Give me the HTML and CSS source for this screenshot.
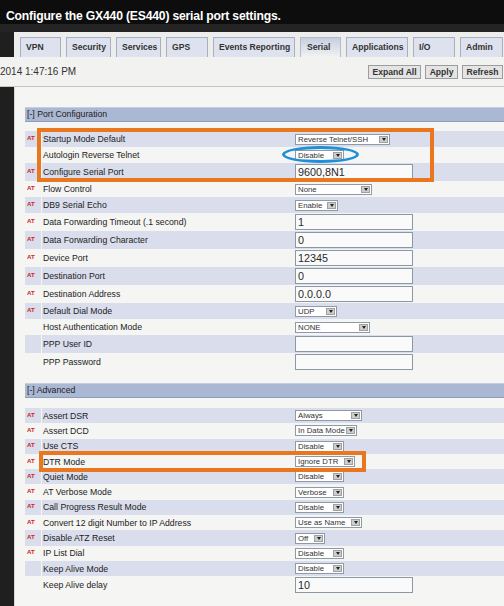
FILE: index.html
```html
<!DOCTYPE html>
<html>
<head>
<meta charset="utf-8">
<link rel="stylesheet" href="styles.css">
</head>
<body>
<div class="titlebar">Configure the GX440 (ES440) serial port settings.</div>
<div class="spacer"></div>
<div class="tabbar">
  <div class="tab">VPN</div>
  <div class="tab">Security</div>
  <div class="tab">Services</div>
  <div class="tab">GPS</div>
  <div class="tab">Events Reporting</div>
  <div class="tab active">Serial</div>
  <div class="tab">Applications</div>
  <div class="tab">I/O</div>
  <div class="tab">Admin</div>
</div>
<div class="daterow">
  <span class="date">2014 1:47:16 PM</span>
  <div class="buttons">
    <span class="btn">Expand All</span>
    <span class="btn">Apply</span>
    <span class="btn">Refresh</span>
  </div>
</div>
<div class="panel">
  <div class="section-head">[-] Port Configuration</div>
  <div class="rows">
    <div class="row alt"><div class="at">AT</div><div class="main"><div class="label">Startup Mode Default</div><div class="value"><div class="select w95"><span class="opt">Reverse Telnet/SSH</span><span class="arrow"></span></div></div></div></div>
    <div class="row"><div class="at"></div><div class="main"><div class="label">Autologin Reverse Telnet</div><div class="value"><div class="select w49"><span class="opt">Disable</span><span class="arrow"></span></div></div></div></div>
    <div class="row in alt"><div class="at">AT</div><div class="main"><div class="label">Configure Serial Port</div><div class="value"><div class="input">9600,8N1</div></div></div></div>
    <div class="row"><div class="at">AT</div><div class="main"><div class="label">Flow Control</div><div class="value"><div class="select w77"><span class="opt">None</span><span class="arrow"></span></div></div></div></div>
    <div class="row alt"><div class="at">AT</div><div class="main"><div class="label">DB9 Serial Echo</div><div class="value"><div class="select w43"><span class="opt">Enable</span><span class="arrow"></span></div></div></div></div>
    <div class="row in"><div class="at">AT</div><div class="main"><div class="label">Data Forwarding Timeout (.1 second)</div><div class="value"><div class="input">1</div></div></div></div>
    <div class="row in alt"><div class="at">AT</div><div class="main"><div class="label">Data Forwarding Character</div><div class="value"><div class="input">0</div></div></div></div>
    <div class="row in"><div class="at">AT</div><div class="main"><div class="label">Device Port</div><div class="value"><div class="input">12345</div></div></div></div>
    <div class="row in alt"><div class="at">AT</div><div class="main"><div class="label">Destination Port</div><div class="value"><div class="input">0</div></div></div></div>
    <div class="row in"><div class="at">AT</div><div class="main"><div class="label">Destination Address</div><div class="value"><div class="input">0.0.0.0</div></div></div></div>
    <div class="row alt"><div class="at">AT</div><div class="main"><div class="label">Default Dial Mode</div><div class="value"><div class="select w42"><span class="opt">UDP</span><span class="arrow"></span></div></div></div></div>
    <div class="row"><div class="at"></div><div class="main"><div class="label">Host Authentication Mode</div><div class="value"><div class="select w75"><span class="opt">NONE</span><span class="arrow"></span></div></div></div></div>
    <div class="row in alt"><div class="at"></div><div class="main"><div class="label">PPP User ID</div><div class="value"><div class="input"></div></div></div></div>
    <div class="row in"><div class="at"></div><div class="main"><div class="label">PPP Password</div><div class="value"><div class="input"></div></div></div></div>
  </div>

  <div class="section-head adv">[-] Advanced</div>
  <div class="rows adv-rows">
    <div class="row alt"><div class="at">AT</div><div class="main"><div class="label">Assert DSR</div><div class="value"><div class="select w67"><span class="opt">Always</span><span class="arrow"></span></div></div></div></div>
    <div class="row"><div class="at">AT</div><div class="main"><div class="label">Assert DCD</div><div class="value"><div class="select w62"><span class="opt">In Data Mode</span><span class="arrow"></span></div></div></div></div>
    <div class="row alt"><div class="at">AT</div><div class="main"><div class="label">Use CTS</div><div class="value"><div class="select w49"><span class="opt">Disable</span><span class="arrow"></span></div></div></div></div>
    <div class="row"><div class="at">AT</div><div class="main"><div class="label">DTR Mode</div><div class="value"><div class="select w60"><span class="opt">Ignore DTR</span><span class="arrow"></span></div></div></div></div>
    <div class="row alt"><div class="at">AT</div><div class="main"><div class="label">Quiet Mode</div><div class="value"><div class="select w49"><span class="opt">Disable</span><span class="arrow"></span></div></div></div></div>
    <div class="row"><div class="at">AT</div><div class="main"><div class="label">AT Verbose Mode</div><div class="value"><div class="select w49"><span class="opt">Verbose</span><span class="arrow"></span></div></div></div></div>
    <div class="row alt"><div class="at">AT</div><div class="main"><div class="label">Call Progress Result Mode</div><div class="value"><div class="select w49"><span class="opt">Disable</span><span class="arrow"></span></div></div></div></div>
    <div class="row"><div class="at">AT</div><div class="main"><div class="label">Convert 12 digit Number to IP Address</div><div class="value"><div class="select w67"><span class="opt">Use as Name</span><span class="arrow"></span></div></div></div></div>
    <div class="row alt"><div class="at">AT</div><div class="main"><div class="label">Disable ATZ Reset</div><div class="value"><div class="select w30"><span class="opt">Off</span><span class="arrow"></span></div></div></div></div>
    <div class="row"><div class="at">AT</div><div class="main"><div class="label">IP List Dial</div><div class="value"><div class="select w49"><span class="opt">Disable</span><span class="arrow"></span></div></div></div></div>
    <div class="row alt"><div class="at"></div><div class="main"><div class="label">Keep Alive Mode</div><div class="value"><div class="select w49"><span class="opt">Disable</span><span class="arrow"></span></div></div></div></div>
    <div class="row in"><div class="at"></div><div class="main"><div class="label">Keep Alive delay</div><div class="value"><div class="input">10</div></div></div></div>
  </div>
</div>

<div class="mark box-port"></div>
<div class="mark ring"></div>
<div class="mark box-dtr"></div>
</body>
</html>
```
FILE: styles.css
```css
* { box-sizing: border-box; }
html, body { margin: 0; padding: 0; }
body {
  width: 504px;
  height: 606px;
  overflow: hidden;
  position: relative;
  background: #1f1f1f;
  font-family: "Liberation Sans", Arial, sans-serif;
}
.titlebar {
  height: 24px;
  background: #0d0d0d;
  color: #ffffff;
  font-weight: bold;
  font-size: 12.2px;
  letter-spacing: -0.2px;
  line-height: 14px;
  padding: 9px 0 0 6px;
  white-space: nowrap;
}
.spacer { height: 8px; background: #242424; }

.tabbar {
  margin-left: 14px;
  height: 25px;
  background: #ededeb;
  padding: 5px 0 0 6px;
  display: flex;
  gap: 5px;
}
.tab {
  height: 20px;
  border: 1px solid #a7b0c2;
  border-bottom: none;
  background: #dde2ee;
  font-weight: bold;
  font-size: 8.6px;
  color: #333;
  line-height: 19px;
  padding-left: 5px;
  white-space: nowrap;
}
.tab:nth-child(1) { width: 41px; }
.tab:nth-child(2) { width: 45px; }
.tab:nth-child(3) { width: 45px; }
.tab:nth-child(4) { width: 42px; }
.tab:nth-child(5) { width: 82px; }
.tab:nth-child(6) { width: 41px; }
.tab:nth-child(7) { width: 62px; }
.tab:nth-child(8) { width: 42px; }
.tab:nth-child(9) { width: 43px; }
.tab.active {
  background: linear-gradient(#c6cee1, #f2f2f0);
  border-color: #b3bccd;
  padding-left: 6px;
}

.daterow {
  height: 30px;
  background: #f2f2f0;
  border-bottom: 1px solid #c4c4c4;
  display: flex;
  align-items: center;
  justify-content: space-between;
  padding-right: 1px;
}
.date { font-size: 10px; color: #333; white-space: nowrap; }
.buttons { display: flex; gap: 4px; }
.btn {
  height: 14px;
  padding: 0 3.5px;
  border: 1px solid #9c9c9c;
  background: #e4e4e4;
  font-weight: bold;
  font-size: 8.6px;
  color: #333;
  line-height: 12px;
  white-space: nowrap;
}

.panel {
  margin-left: 14px;
  height: 519px;
  background: #f5f5f3;
  border-left: 1px solid #d6d6d4;
  padding: 20px 0 0 10px;
}
.section-head {
  height: 15px;
  background: #abb8d3;
  border-top: 1px solid #c6cfe2;
  border-bottom: 1px solid #8e9db9;
  font-size: 8.7px;
  color: #222;
  line-height: 13px;
  padding-left: 2px;
  white-space: nowrap;
}
.section-head.adv { margin-top: 12px; }
.rows { margin-top: 9px; }
.rows.adv-rows { margin-top: 10px; }

.row { display: flex; height: 16px; }
.row.in { height: 18px; }
.adv-rows .row { height: 15.3px; }
.adv-rows .row.in { height: 18px; }

.at {
  width: 16px;
  margin-right: 1px;
  font-weight: bold;
  font-size: 6.2px;
  color: #d02626;
  display: flex;
  align-items: center;
  padding: 0 0 3px 2px;
}
.main { flex: 1; display: flex; align-items: center; }
.alt .at, .alt .main { background: #d9ddec; }
.label {
  width: 251px;
  padding-left: 1px;
  font-size: 8.7px;
  color: #222;
  white-space: nowrap;
}
.value { padding-left: 2px; display: flex; align-items: center; }

.select {
  display: flex;
  align-items: center;
  height: 11px;
  border: 1px solid #8e9aa6;
  background: #ffffff;
  font-size: 7.8px;
  color: #333;
  padding-left: 2px;
}
.select .opt { flex: 1; white-space: nowrap; overflow: hidden; line-height: 9px; }
.select .arrow {
  width: 9px;
  height: 7px;
  background: #cdcdcd;
  border: 1px solid #a0a0a0;
  margin-right: 1px;
  display: flex;
  align-items: center;
  justify-content: center;
}
.select .arrow::after {
  content: "";
  border-left: 2.5px solid transparent;
  border-right: 2.5px solid transparent;
  border-top: 3px solid #222;
}
.w30 { width: 30px; }
.w42 { width: 42px; }
.w43 { width: 43px; }
.w49 { width: 49px; }
.w60 { width: 60px; }
.w62 { width: 62px; }
.w67 { width: 67px; }
.w75 { width: 75px; }
.w77 { width: 77px; }
.w95 { width: 95px; }

.input {
  width: 118px;
  height: 16px;
  border: 1px solid #8a99a3;
  background: #fafafa;
  font-size: 10.8px;
  color: #2a2a2a;
  padding-left: 2px;
  line-height: 14px;
  white-space: nowrap;
}

.mark { position: absolute; pointer-events: none; }
.box-port { left: 37px; top: 128px; width: 397px; height: 54px; border: 4px solid #e8771f; }
.ring { left: 282px; top: 146px; width: 77px; height: 17px; border: 3.5px solid #1e8fd8; border-radius: 50%; }
.box-dtr { left: 39px; top: 451px; width: 327px; height: 21px; border: 4px solid #e8771f; }
```
